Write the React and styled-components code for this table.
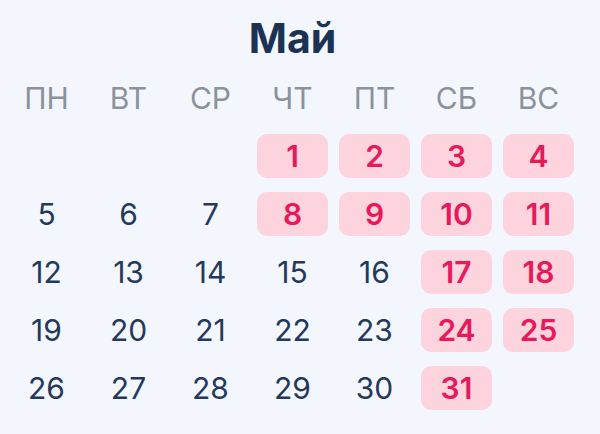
import React from 'react';
import styled, { createGlobalStyle } from 'styled-components';

const GlobalStyle = createGlobalStyle`
  body {
    margin: 0;
    background: #f3f6fd;
    font-family: Inter, "Noto Sans", sans-serif;
  }
`;

const Page = styled.div`
  width: 600px;
  height: 434px;
  padding: 12px 0 0 11px;
  box-sizing: border-box;
  background: #f3f6fd;
`;

const Title = styled.h1`
  width: 563px;
  margin: 0 0 12px;
  height: 52px;
  line-height: 52px;
  text-align: center;
  font-size: 41px;
  font-weight: 700;
  color: #1c3253;
`;

const Grid = styled.div`
  width: 563px;
  display: grid;
  grid-template-columns: repeat(7, 71px);
  grid-auto-rows: 44px;
  column-gap: 11px;
  row-gap: 14px;
`;

const WeekDay = styled.div`
  display: flex;
  align-items: center;
  justify-content: center;
  font-size: 30px;
  font-weight: 400;
  color: #8b929b;
`;

const Day = styled.div`
  display: flex;
  align-items: center;
  justify-content: center;
  border-radius: 10px;
  font-size: 30px;
  font-weight: ${p => (p.$holiday ? 600 : 400)};
  color: ${p => (p.$holiday ? '#e8195a' : '#24395a')};
  background: ${p => (p.$holiday ? '#fdd3de' : 'transparent')};
`;

const weekDays = ['ПН', 'ВТ', 'СР', 'ЧТ', 'ПТ', 'СБ', 'ВС'];
const holidays = [1, 2, 3, 4, 8, 9, 10, 11, 17, 18, 24, 25, 31];

const cells = [null, null, null];
for (let d = 1; d <= 31; d++) cells.push(d);

export default function App() {
  return (
    <>
      <GlobalStyle />
      <Page>
        <Title>Май</Title>
        <Grid>
          {weekDays.map(w => (
            <WeekDay key={w}>{w}</WeekDay>
          ))}
          {cells.map((d, i) =>
            d === null ? (
              <Day key={'e' + i} />
            ) : (
              <Day key={d} $holiday={holidays.includes(d)}>
                {d}
              </Day>
            )
          )}
        </Grid>
      </Page>
    </>
  );
}
